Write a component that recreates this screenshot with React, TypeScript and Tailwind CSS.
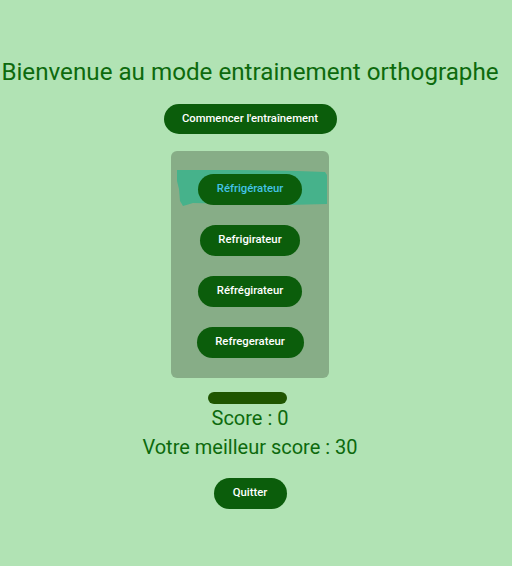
export default function App() {
  const choices = [
    { label: "Réfrigérateur", w: "w-[104px]", active: true },
    { label: "Refrigirateur", w: "w-[100px]", active: false },
    { label: "Réfrégirateur", w: "w-[104px]", active: false },
    { label: "Refregerateur", w: "w-[107px]", active: false },
  ];

  return (
    <div className="min-h-[566px] w-full bg-[#b1e3b4] font-['Roboto',sans-serif] flex flex-col items-center pt-[57px] pr-[12px]">
      <h1 className="text-[24.2px] leading-[30px] text-[#0d6a0d] whitespace-nowrap">
        Bienvenue au mode entrainement orthographe
      </h1>
      <button className="mt-[17px] h-[30px] w-[173px] rounded-full bg-[#0b5d0b] text-white text-[11.3px] font-medium">
        Commencer l'entraînement
      </button>

      <div className="mt-[17px] w-[158px] h-[227px] rounded-md bg-[#87ad87] flex flex-col items-center pt-[23px] gap-[20px]">
        {choices.map((c) => (
          <div key={c.label} className="relative w-full flex justify-center">
            {c.active && (
              <svg
                className="absolute left-[6px] top-[-5px]"
                width="150"
                height="38"
                viewBox="0 0 150 38"
              >
                <polygon
                  points="0,1 60,1 120,2 148,3 150,6 150,35 110,36 60,35 16,34 6,37 3,32 2,20 0,12"
                  fill="#46b28b"
                />
              </svg>
            )}
            <button
              className={`relative h-[31px] ${c.w} rounded-full bg-[#0b5d0b] text-[11.3px] font-medium ${
                c.active ? "text-[#45c3e6]" : "text-white"
              }`}
            >
              {c.label}
            </button>
          </div>
        ))}
      </div>

      <div className="mt-[14px] mr-[6px] h-[12px] w-[79px] rounded-full bg-[#1f5500]" />
      <p className="mt-[2px] text-[20px] leading-[24px] text-[#0d6a0d]">Score : 0</p>
      <p className="mt-[5px] text-[20px] leading-[24px] text-[#0d6a0d]">Votre meilleur score : 30</p>
      <button className="mt-[19px] h-[31px] w-[73px] rounded-full bg-[#0b5d0b] text-white text-[11.3px] font-medium">
        Quitter
      </button>
    </div>
  );
}
